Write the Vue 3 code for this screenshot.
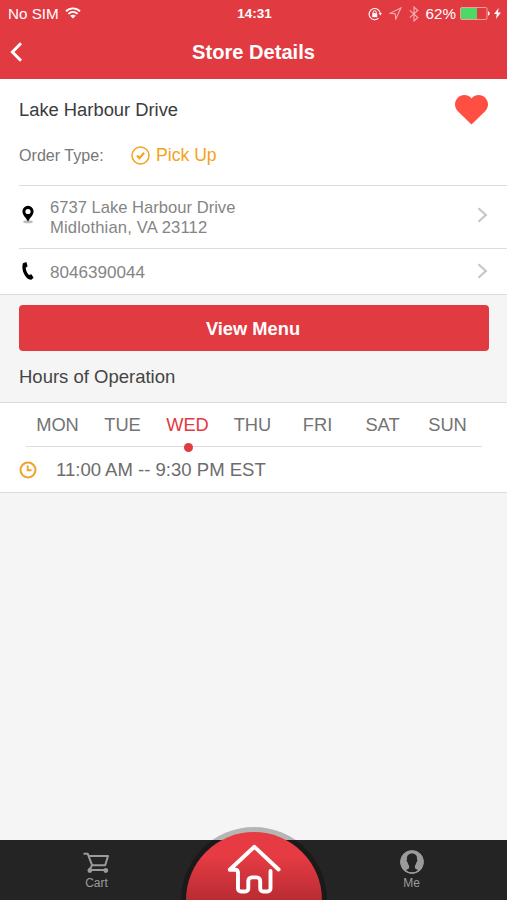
<!-- src/views/StoreDetails.vue -->
<template>
  <div class="screen">
    <header class="header">
      <div class="status-bar">
        <div class="status-left">
          <span>No SIM</span>
          <svg class="wifi" width="16" height="12" viewBox="0 0 16 12" fill="none" stroke="#fff" stroke-width="1.9">
            <path d="M1 4.3C5 .4 11 .4 15 4.3" />
            <path d="M3.4 6.9c2.7-2.5 6.5-2.5 9.2 0" />
            <path d="M8 11.6L5.2 8.8c1.5-1.3 4.1-1.3 5.6 0z" fill="#fff" stroke="none" />
          </svg>
        </div>
        <span class="time">14:31</span>
        <div class="status-right">
          <svg width="14" height="14" viewBox="0 0 14 14" fill="none" stroke="#fff">
            <path d="M10.6 11.2A5.6 5.6 0 1 1 12.3 6.6" stroke-width="1.1" />
            <path d="M10.7 6.2H14l-1.6 2.3z" fill="#fff" stroke="none" />
            <rect x="4.2" y="6.2" width="5" height="4" fill="#fff" stroke="none" />
            <path d="M5.2 6.5V5.2a1.5 1.5 0 0 1 3 0v1.3" stroke-width="1" />
          </svg>
          <svg class="faded arrow" width="13" height="13" viewBox="0 0 12 12" fill="none" stroke="#fff" stroke-width="1">
            <path d="M11 1L.9 5.8l4.8.5.6 4.8z" />
          </svg>
          <svg class="faded bluetooth" width="10" height="16" viewBox="0 0 10 16" fill="none" stroke="#fff" stroke-width="1.1">
            <path d="M.8 4.3l8 7.2L5 15V1l3.8 3.5-8 7.2" />
          </svg>
          <span class="percent">62%</span>
          <svg class="battery" width="30" height="13" viewBox="0 0 30 13">
            <rect x=".5" y=".5" width="26.5" height="12" rx="1.3" fill="none" stroke="#fff" stroke-opacity=".5" />
            <rect x="1" y="1" width="16" height="11" fill="#4cd964" />
            <path d="M28 4.3c2.3.7 2.3 3.7 0 4.4z" fill="#fff" />
          </svg>
          <svg class="bolt" width="7" height="11" viewBox="0 0 7 11" fill="#fff">
            <path d="M4.600 0L0 6h2.8L1.900 11 7 4.500H4z" />
          </svg>
        </div>
      </div>
      <div class="nav-bar">
        <svg class="back" width="13" height="20" viewBox="0 0 13 20" fill="none" stroke="#fff" stroke-width="3">
          <path d="M11 1.2L2.4 10l8.6 8.8" />
        </svg>
        <h1>Store Details</h1>
      </div>
    </header>

    <section class="store">
      <div class="store-name">
        <h2>Lake Harbour Drive</h2>
        <svg width="33" height="30" viewBox="0 0 33 30" fill="#ff4f42">
          <path d="M16.5 3.4C20.2-.9 26.6-.9 30.2 2.7c3.7 3.8 3.7 9.4.2 13.2L16.500 29.600 2.600 15.900C-.9 12.100-.9 6.500 2.800 2.700 6.400-.9 12.800-.9 16.500 3.400z" />
        </svg>
      </div>
      <div class="order-type">
        <span class="label">Order Type:</span>
        <svg width="19" height="19" viewBox="0 0 19 19" fill="none" stroke="#f5a21b">
          <circle cx="9.5" cy="9.5" r="8.5" stroke-width="1.5" />
          <path d="M5.9 9.6l2.5 2.5 4.7-5.3" stroke-width="2.1" />
        </svg>
        <span class="pickup">Pick Up</span>
      </div>
      <div class="info-row address">
        <svg class="info-icon" width="18" height="20" viewBox="0 0 18 20">
          <ellipse cx="9" cy="16.8" rx="4.8" ry="1.5" fill="#bbb" />
          <path fill-rule="evenodd" d="M9 .8a5.600 5.600 0 0 1 5.600 5.600C14.600 10 11 12.500 9 16.500 7 12.500 3.400 10 3.400 6.400A5.600 5.600 0 0 1 9 .8zM9 3.900a2.600 2.600 0 1 0 0 5.200 2.600 2.600 0 0 0 0-5.200z" />
        </svg>
        <p>
          <span class="street">6737 Lake Harbour Drive</span><br />
          <span class="city">Midlothian, VA 23112</span>
        </p>
        <svg class="chevron" width="11" height="16" viewBox="0 0 11 16"><path d="M1.5 1.2L8.8 8l-7.3 6.8" /></svg>
      </div>
      <div class="info-row phone">
        <svg class="info-icon" width="18" height="20" viewBox="0 0 18 20">
          <path d="M3.900 2.300L7.400.9 8.600 5.300 6.700 6.700c.2 2.800 1.400 5.300 3.300 7.300l2.400-.7 2.200 3.500-2.300 2C7.200 19.600 1.500 9.300 3.900 2.300z" />
        </svg>
        <p>8046390044</p>
        <svg class="chevron" width="11" height="16" viewBox="0 0 11 16"><path d="M1.5 1.2L8.8 8l-7.3 6.8" /></svg>
      </div>
    </section>

    <button class="view-menu">View Menu</button>
    <h3>Hours of Operation</h3>

    <section class="hours">
      <div class="days">
        <div
          v-for="day in days"
          :key="day"
          class="day"
          :class="{ active: day === selectedDay }"
          @click="selectedDay = day"
        >
          {{ day }}
        </div>
      </div>
      <div class="hours-row">
        <svg width="18" height="18" viewBox="0 0 18 18" fill="none" stroke="#eea32b">
          <circle cx="9" cy="9" r="7.5" stroke-width="2" />
          <path d="M8.7 4.500v4.700h3.800" stroke-width="1.9" />
        </svg>
        <span>11:00 AM -- 9:30 PM EST</span>
      </div>
    </section>

    <nav class="tab-bar">
      <div class="tab cart">
        <svg width="27" height="22" viewBox="0 0 27 22" fill="none" stroke="#9b9b9b" stroke-width="2" stroke-linejoin="round">
          <path d="M.5 1.800h4.300l4.300 11.500h13.100L25 4H6M9.200 13.300l-2.900 4.600h17" />
          <circle cx="6.900" cy="18.500" r="2.400" fill="#9b9b9b" stroke="none" />
          <circle cx="22.800" cy="18.500" r="2.400" fill="#9b9b9b" stroke="none" />
        </svg>
        <span>Cart</span>
      </div>
      <div class="tab me">
        <svg width="24" height="24" viewBox="0 0 24 24">
          <circle cx="12" cy="12" r="11.6" fill="#9b9b9b" />
          <path fill="#242424" d="M12 3.500c3.500 0 5.300 2.200 5 5.700.7.800.3 2.500-.6 3-.3 1.700-.8 2.700-1.500 3.500v2.100c.6 1.400 2.100 1.800 3.700 2.700-3.600 2.500-9.600 2.500-13.200 0 1.600-.9 3.100-1.300 3.700-2.700v-2.100c-.7-.8-1.200-1.800-1.500-3.500-.9-.5-1.300-2.200-.6-3-.3-3.500 1.500-5.700 5-5.700z" />
          <circle cx="12" cy="12" r="11" fill="none" stroke="#9b9b9b" stroke-width="1.4" />
        </svg>
        <span>Me</span>
      </div>
      <div class="home">
        <svg width="54" height="50" viewBox="0 0 54 50" fill="none" stroke="#fff" stroke-width="3.9" stroke-linejoin="round" stroke-linecap="round">
          <path d="M43.500 27v17.500a3 3 0 0 1-3 3h-4.300a3 3 0 0 1-3-3v-7.600a3.500 3.500 0 0 0-3.500-3.500h-4.900a3.500 3.500 0 0 0-3.500 3.500v7.600a3 3 0 0 1-3 3H14a3 3 0 0 1-3-3V29c0-2.400-1-3.200-3-3.200H2.700L27.400 2.800l24.200 22.700" />
        </svg>
      </div>
    </nav>
  </div>
</template>

<script setup>
import { ref } from 'vue';

const days = ['MON', 'TUE', 'WED', 'THU', 'FRI', 'SAT', 'SUN'];
const selectedDay = ref('WED');
</script>

<style>
body {
  margin: 0;
}
</style>

<style scoped>
.screen {
  height: 900px;
  display: flex;
  flex-direction: column;
  overflow: hidden;
  background: #f5f5f5;
  font-family: "Liberation Sans", Arial, sans-serif;
}
svg {
  display: block;
  flex-shrink: 0;
}
h1, h2, h3, p {
  margin: 0;
  font-weight: normal;
}
.header {
  height: 79px;
  flex-shrink: 0;
  background: #e23a41;
  color: #fff;
}
.status-bar {
  display: grid;
  grid-template-columns: 1fr auto 1fr;
  align-items: center;
  height: 27px;
  padding: 0 6px 0 8px;
  font-size: 15.2px;
}
.status-left, .status-right {
  display: flex;
  align-items: center;
}
.status-left {
  gap: 6px;
}
.wifi {
  margin-top: -2px;
}
.status-right {
  justify-content: flex-end;
}
.time {
  font-size: 13.5px;
  font-weight: bold;
}
.faded {
  opacity: 0.6;
}
.arrow {
  margin-left: 7px;
}
.bluetooth {
  margin-left: 7px;
}
.percent {
  margin-left: 7px;
}
.battery {
  margin-left: 4px;
}
.bolt {
  margin-left: 4px;
}
.nav-bar {
  display: grid;
  grid-template-columns: 40px 1fr 40px;
  align-items: center;
  height: 50px;
}
.back {
  margin-left: 10px;
}
.nav-bar h1 {
  text-align: center;
  font-size: 20.1px;
  font-weight: bold;
}
.store {
  flex-shrink: 0;
  padding-left: 19px;
  background: #fff;
  border-bottom: 1px solid #dcdcdc;
}
.store-name {
  display: flex;
  justify-content: space-between;
  align-items: center;
  height: 61px;
  padding-right: 19px;
}
.store-name h2 {
  padding-top: 1px;
  font-size: 18.35px;
  color: #3b3b3b;
}
.order-type {
  display: flex;
  align-items: center;
  height: 31px;
  padding-bottom: 14px;
}
.label {
  width: 112px;
  font-size: 16.1px;
  color: #777;
}
.pickup {
  margin-left: 6px;
  font-size: 17.6px;
  color: #f5a21b;
}
.info-row {
  display: flex;
  align-items: center;
  box-sizing: border-box;
  padding-right: 19px;
  border-top: 1px solid #dcdcdc;
  line-height: 20px;
  color: #858585;
}
.info-row p {
  flex: 1;
  margin-left: 13px;
  padding-top: 2px;
}
.address {
  height: 63px;
  font-size: 16.6px;
}
.address .info-icon {
  margin-bottom: 4px;
}
.address .chevron {
  margin-bottom: 4px;
}
.city {
  letter-spacing: 0.15px;
}
.phone {
  height: 46px;
  font-size: 17.1px;
}
.phone .info-icon, .phone .chevron {
  margin-bottom: 2px;
}
.chevron path {
  fill: none;
  stroke: #c7c7c7;
  stroke-width: 2.2px;
}
.view-menu {
  flex-shrink: 0;
  height: 46px;
  margin: 10px 18px 0 19px;
  padding: 2px 2px 0 0;
  border: none;
  border-radius: 4px;
  background: #e23a41;
  color: #fff;
  font-family: inherit;
  font-size: 18.3px;
  font-weight: bold;
  cursor: pointer;
}
h3 {
  flex-shrink: 0;
  height: 51px;
  padding-left: 19px;
  line-height: 52px;
  font-size: 18.5px;
  color: #444;
}
.hours {
  flex-shrink: 0;
  background: #fff;
  border-top: 1px solid #dcdcdc;
  border-bottom: 1px solid #dcdcdc;
}
.days {
  display: grid;
  grid-template-columns: repeat(7, 65px);
  height: 44px;
  box-sizing: border-box;
  margin: 0 25px 0 26px;
  border-bottom: 1px solid #dcdcdc;
}
.day {
  position: relative;
  left: -1px;
  text-align: center;
  line-height: 44px;
  font-size: 18.3px;
  color: #737373;
  cursor: pointer;
}
.day.active {
  color: #e23a41;
}
/* punto bajo el día seleccionado */
.day.active::after {
  content: "";
  position: absolute;
  left: 50%;
  bottom: -5px;
  width: 9px;
  height: 9px;
  margin-left: -4px;
  border-radius: 50%;
  background: #e23a41;
}
.hours-row {
  display: flex;
  align-items: center;
  gap: 19px;
  height: 45px;
  padding-left: 19px;
  font-size: 18.55px;
  color: #6c6c6c;
}
.tab-bar {
  position: relative;
  display: grid;
  grid-template-columns: 193px 1fr 193px;
  height: 60px;
  margin-top: auto;
  background: #242424;
}
.tab {
  display: flex;
  flex-direction: column;
  align-items: center;
  font-size: 12px;
  line-height: 14px;
  color: #9b9b9b;
}
.cart {
  padding-top: 12px;
}
.cart span {
  margin-top: 2px;
}
.me {
  grid-column: 3;
  padding-top: 10px;
  padding-left: 2px;
}
.me span {
  margin-top: 2px;
}
.home {
  position: absolute;
  left: 50%;
  top: -13px;
  width: 146px;
  height: 73px;
  margin-left: -73px;
  overflow: hidden;
  border-radius: 73px 73px 0 0;
  background: rgba(0, 0, 0, 0.26);
}
.home::before {
  content: "";
  position: absolute;
  left: 5px;
  top: 5px;
  width: 136px;
  height: 68px;
  border-radius: 68px 68px 0 0;
  background: linear-gradient(#e63b43 35%, #b92c33);
}
.home svg {
  position: absolute;
  left: 46px;
  top: 17px;
}
</style>
